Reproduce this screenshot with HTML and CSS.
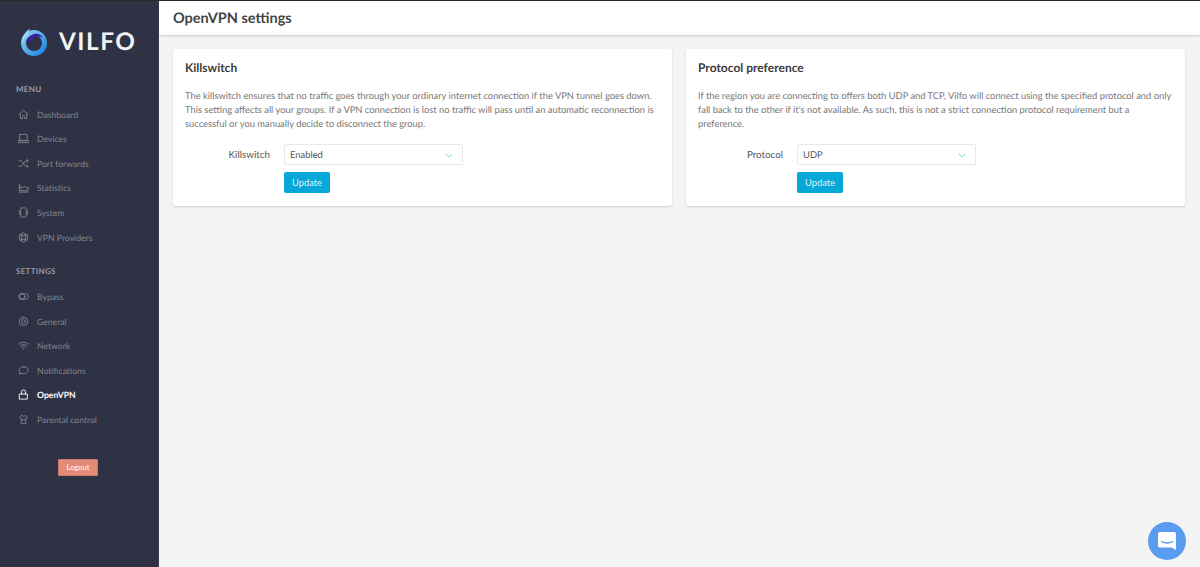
FILE: index.html
```html
<!DOCTYPE html>
<html lang="en">
<head>
<meta charset="utf-8">
<title>OpenVPN settings</title>
<link rel="stylesheet" href="styles.css">
</head>
<body>
<div class="app">
  <aside class="sidebar">
    <div class="brand">
      <svg class="brand-mark" viewBox="0 0 28 28" width="28" height="28">
        <defs>
          <linearGradient id="ring" x1="0" y1="0" x2="1" y2="1"><stop offset="0" stop-color="#8ccdf7"/><stop offset="1" stop-color="#1c86e0"/></linearGradient>
        </defs>
        <circle cx="14" cy="15" r="10.500" fill="none" stroke="url(#ring)" stroke-width="5"/>
        <path d="M8 13c1-5 5-8 10-7 3 1 4 2 5 4-3-2-7-2-9 0-2 1-3 3-3 5 0-1-2-1-3-2z" fill="#3a1f9e"/>
        <path d="M2 13C3 7 6 3 10 0.500 8.500 3 8 5 9 7 6 8.500 4 10.500 3 15z" fill="#9ad6fa"/>
      </svg>
      <span class="brand-name">VILFO</span>
    </div>
    <h2 class="nav-title">MENU</h2>
    <nav class="nav">
      <a class="nav-item"><svg class="ico" viewBox="0 0 12 12"><path d="M1 6l5-4.500L11 6M2.500 5v5.500h2.500V8a1 1 0 0 1 2 0v2.500h2.500V5"/></svg>Dashboard</a>
      <a class="nav-item"><svg class="ico" viewBox="0 0 12 12"><path d="M2 1.500h8v6.500H2zM.5 8.500h11v2H.5z"/></svg>Devices</a>
      <a class="nav-item"><svg class="ico" viewBox="0 0 12 12"><path d="M1 3h2.500l5 6H11M1 9h2.500l5-6H11M9.500 1.500L11 3 9.500 4.500M9.500 7.500L11 9l-1.500 1.500"/></svg>Port forwards</a>
      <a class="nav-item"><svg class="ico" viewBox="0 0 12 12"><path d="M1.500 2v7.500H11M1 11h10M3 7V5l2 1.500L7 4.500l2 2 2-1v3"/></svg>Statistics</a>
      <a class="nav-item"><svg class="ico" viewBox="0 0 12 12"><path d="M4 1h4a1 1 0 0 1 1 1v8a1 1 0 0 1-1 1H4a1 1 0 0 1-1-1V2a1 1 0 0 1 1-1zM1.800 4v4M10.200 4v4"/></svg>System</a>
      <a class="nav-item"><svg class="ico" viewBox="0 0 12 12"><path d="M6 1l4.500 2.500v5L6 11 1.500 8.500v-5zM3 4h6M3 8h6M4 2.500v7M8 2.500v7"/></svg>VPN Providers</a>
    </nav>
    <h2 class="nav-title nav-title-settings">SETTINGS</h2>
    <nav class="nav">
      <a class="nav-item"><svg class="ico" viewBox="0 0 12 12"><rect x=".7" y="3" width="10.600" height="6" rx="3"/><circle cx="4.500" cy="6" r="3"/></svg>Bypass</a>
      <a class="nav-item"><svg class="ico" viewBox="0 0 12 12"><path d="M6 1l1 1.200 1.700-.2.500 1.500 1.500.8-.5 1.700.5 1.700-1.500.8-.5 1.500-1.700-.2L6 11l-1-1.200-1.700.2-.5-1.500-1.500-.8L1.800 6l-.5-1.700 1.500-.8.500-1.500 1.700.2z"/><circle cx="6" cy="6" r="2"/></svg>General</a>
      <a class="nav-item"><svg class="ico" viewBox="0 0 12 12"><path d="M.5 4.500C3.500 1.800 8.500 1.800 11.500 4.500M2.300 6.300c2-1.800 5.400-1.800 7.400 0M4 8c1.200-.9 2.800-.9 4 0M6 10v.4"/></svg>Network</a>
      <a class="nav-item"><svg class="ico" viewBox="0 0 12 12"><path d="M6.500 2c2.800 0 4.500 1.600 4.500 3.700S9.300 9.500 6.500 9.500c-1 0-1.700-.1-2.500-.5l-2.500 1 .7-2C1.500 7.300 1.200 6.500 1.200 5.700 1.200 3.600 3.700 2 6.500 2z"/></svg>Notifications</a>
      <a class="nav-item is-active"><svg class="ico" viewBox="0 0 12 12"><path d="M1.800 5.500h8.400V11H1.800zM3.800 5.500V3.200a2.200 2.200 0 0 1 4.400 0v2.300"/></svg>OpenVPN</a>
      <a class="nav-item"><svg class="ico" viewBox="0 0 12 12"><path d="M4 1.500L1.500 3.500l1.500 1.500 .5-.5V10.500h5V4.500l.5 .5 1.500-1.500L8 1.500C7.500 3 4.500 3 4 1.500zM4 6.500h4"/></svg>Parental control</a>
    </nav>
    <div class="logout-wrap"><button class="logout">Logout</button></div>
  </aside>
  <main class="main">
    <header class="topbar"><h1>OpenVPN settings</h1></header>
    <div class="cards">
      <section class="card">
        <h3>Killswitch</h3>
        <p>The killswitch ensures that no traffic goes through your ordinary internet connection if the VPN tunnel goes down. This setting affects all your groups. If a VPN connection is lost no traffic will pass until an automatic reconnection is successful or you manually decide to disconnect the group.</p>
        <div class="field">
          <label>Killswitch</label>
          <div class="select">Enabled<svg class="chev" viewBox="0 0 10 6"><path d="M1 1l4 4 4-4"/></svg></div>
        </div>
        <div class="actions"><button class="update">Update</button></div>
      </section>
      <section class="card">
        <h3>Protocol preference</h3>
        <p>If the region you are connecting to offers both UDP and TCP, Vilfo will connect using the specified protocol and only fall back to the other if it's not available. As such, this is not a strict connection protocol requirement but a preference.</p>
        <div class="field">
          <label>Protocol</label>
          <div class="select">UDP<svg class="chev" viewBox="0 0 10 6"><path d="M1 1l4 4 4-4"/></svg></div>
        </div>
        <div class="actions"><button class="update">Update</button></div>
      </section>
    </div>
  </main>
</div>
<div class="chat">
  <svg viewBox="0 0 24 24" width="24" height="24"><path d="M5 3h14a2 2 0 0 1 2 2v16l-4-2.500H5a2 2 0 0 1-2-2V5a2 2 0 0 1 2-2z" fill="#fff"/><path d="M6.500 12.500c3 2 8 2 11 0" fill="none" stroke="#5a9cf0" stroke-width="1.300" stroke-linecap="round"/></svg>
</div>
</body>
</html>
```

FILE: styles.css
```css
* { box-sizing: border-box; }
html, body { margin: 0; height: 100%; overflow: hidden; }
body { font-family: Lato, "Open Sans", sans-serif; background: #f4f4f4; color: #3c3c3c; text-rendering: geometricPrecision; }
.app { display: flex; height: 567px; border-top: 1px solid #2a2a2a; }

.sidebar { width: 159px; flex: none; background: #2f3144; color: #8b8d99; border-right: 1px solid #3b3d4e; }
.brand { display: flex; align-items: center; gap: 11px; padding: 19px 0 0 20px; height: 62px; }
.brand-mark { flex: none; }
.brand-name { font-size: 24.300px; font-weight: 700; letter-spacing: 1.500px; color: #f3f3f4; line-height: 28px; }
.nav-title { margin: 21px 0 0 16px; font-size: 8px; font-weight: 700; letter-spacing: .3px; line-height: 11px; color: #9a9ca7; }
.nav-title-settings { margin-top: 17px; }
.nav { display: flex; flex-direction: column; margin-top: 7px; }
.nav-item { display: flex; align-items: center; height: 24.550px; padding-left: 18px; font-size: 8.650px; color: #83858f; }
.nav-item.is-active { color: #fff; font-weight: 700; }
.ico { width: 11px; height: 11px; margin-right: 8px; fill: none; stroke: currentColor; stroke-width: 1; stroke-linejoin: round; stroke-linecap: round; flex: none; }
.logout-wrap { display: flex; justify-content: center; padding: 27px 2px 0 0; }
.logout { width: 40px; height: 17px; padding: 0; border: 1px solid #c97a68; border-radius: 1px; background: #e58a76; color: #fff; font: 400 7.500px Lato, sans-serif; }

.main { flex: 1; min-width: 0; }
.topbar { height: 34px; background: #fff; box-shadow: 0 1px 2px rgba(0,0,0,.2); padding-left: 14px; display: flex; align-items: center; }
.topbar h1 { margin: 0; font-size: 14.500px; font-weight: 700; color: #444; }
.cards { display: flex; gap: 14px; padding: 14px 15px 0 14px; align-items: flex-start; }
.card { flex: 1; height: 157px; background: #fff; border-radius: 3px; box-shadow: 0 1px 2px rgba(0,0,0,.16); padding: 12px 12px 0; }
.card h3 { margin: 0; font-size: 12px; font-weight: 700; line-height: 14px; color: #3c3c3c; }
.card p { margin: 14px 0 0; font-size: 9.350px; line-height: 14px; color: #777; }
.field { display: flex; align-items: center; margin-top: 13px; }
.field label { width: 85px; padding-top: 1px; text-align: right; font-size: 9.800px; color: #555; }
.select { margin-left: 14px; width: 179px; height: 21px; display: flex; align-items: center; justify-content: space-between; padding: 1px 9px 0 5px; background: #fff; border: 1px solid #e8e8e8; border-radius: 2px; font-size: 9.400px; color: #555; }
.chev { width: 8px; height: 5px; fill: none; stroke: #5fc0dd; stroke-width: 1; }
.actions { padding: 7px 0 0 99px; }
.update { width: 46px; height: 21px; padding: 0; border: 0; border-radius: 2px; background: #05a8d8; color: #dff3fa; font: 400 9.400px Lato, sans-serif; display: block; }

.chat { position: absolute; right: 14px; bottom: 7px; width: 38px; height: 38px; border-radius: 50%; background: #5a9cf0; display: flex; align-items: center; justify-content: center; }
```
